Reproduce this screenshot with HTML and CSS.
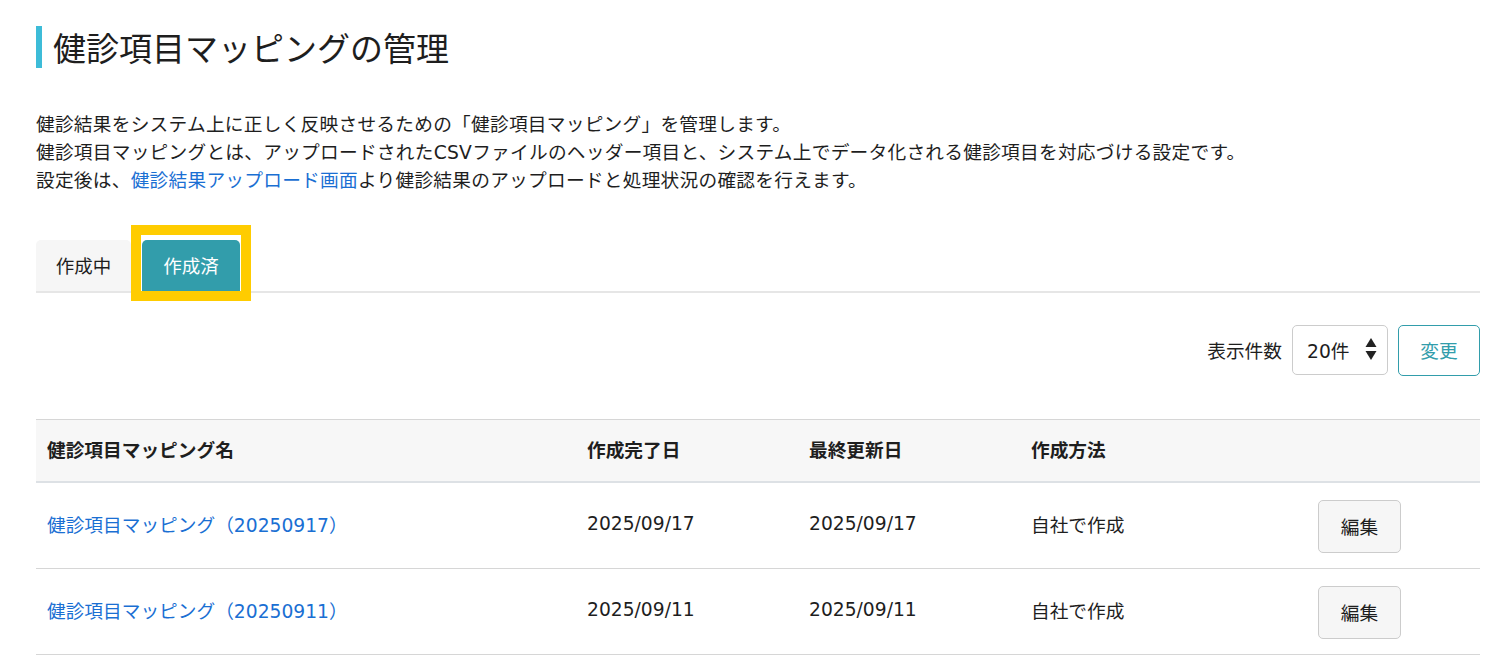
FILE: index.html
```html
<!DOCTYPE html>
<html lang="ja">
<head>
<meta charset="utf-8">
<title>健診項目マッピングの管理</title>
<link rel="stylesheet" href="styles.css">
</head>
<body>
<main class="page">
  <h1 class="title">健診項目マッピングの管理</h1>
  <div class="desc">
    <p>健診結果をシステム上に正しく反映させるための「健診項目マッピング」を管理します。</p>
    <p>健診項目マッピングとは、アップロードされたCSVファイルのヘッダー項目と、システム上でデータ化される健診項目を対応づける設定です。</p>
    <p>設定後は、<a href="#" class="link">健診結果アップロード画面</a>より健診結果のアップロードと処理状況の確認を行えます。</p>
  </div>
  <div class="tabs">
    <div class="tab">作成中</div>
    <div class="tab tab-active">作成済<span class="highlight"></span></div>
  </div>
  <div class="toolbar">
    <span class="toolbar-label">表示件数</span>
    <div class="select">
      <span>20件</span>
      <svg class="arrows" width="12" height="24" viewBox="0 0 12 24"><path d="M6 1 L11.5 10 H0.5 Z" fill="#222"/><path d="M6 23 L11.5 14 H0.5 Z" fill="#222"/></svg>
    </div>
    <button class="btn-change">変更</button>
  </div>
  <table class="table">
    <colgroup>
      <col class="c1"><col class="c2"><col class="c3"><col class="c4"><col class="c5">
    </colgroup>
    <thead>
      <tr><th>健診項目マッピング名</th><th>作成完了日</th><th>最終更新日</th><th>作成方法</th><th></th></tr>
    </thead>
    <tbody>
      <tr>
        <td><a href="#" class="link">健診項目マッピング（20250917）</a></td>
        <td>2025/09/17</td><td>2025/09/17</td><td>自社で作成</td>
        <td class="action"><button class="btn-edit">編集</button></td>
      </tr>
      <tr>
        <td><a href="#" class="link">健診項目マッピング（20250911）</a></td>
        <td>2025/09/11</td><td>2025/09/11</td><td>自社で作成</td>
        <td class="action"><button class="btn-edit">編集</button></td>
      </tr>
    </tbody>
  </table>
</main>
</body>
</html>
```

FILE: styles.css
```css
html, body {
  margin: 0;
  padding: 0;
  background: #fff;
}
body {
  font-family: "DejaVu Sans", "Noto Sans CJK JP", sans-serif;
  color: #1e1e1e;
  font-size: 18.7px;
}
.page {
  margin: 0 6px 0 36px;
  padding-top: 26px;
}
.title {
  margin: 0;
  font-size: 33px;
  font-weight: normal;
  line-height: 42px;
  border-left: 6px solid #3dbcd8;
  padding-left: 11px;
  font-family: "Noto Sans CJK JP", sans-serif;
}
.desc {
  margin-top: 43px;
  font-size: 18.7px;
  line-height: 28px;
  letter-spacing: 0.25px;
}
.desc p {
  margin: 0;
}
.link {
  color: #1a6fd3;
  text-decoration: none;
}
.tabs {
  margin-top: 45px;
  display: flex;
  gap: 11px;
  border-bottom: 2px solid #e6e6e6;
  height: 51px;
}
.tab {
  position: relative;
  width: 95px;
  height: 51px;
  display: flex;
  align-items: center;
  justify-content: center;
  background: #f6f6f6;
  border-radius: 5px 5px 0 0;
  font-size: 18.5px;
  box-sizing: border-box;
  padding-bottom: 2px;
}
.tab-active {
  width: 98px;
  background: #329dab;
  color: #fff;
}
.highlight {
  position: absolute;
  left: -11px;
  top: -15px;
  width: 100px;
  height: 56px;
  border: 10px solid #ffcc00;
  pointer-events: none;
}
.toolbar {
  margin-top: 32px;
  display: flex;
  justify-content: flex-end;
  align-items: center;
  height: 50px;
}
.toolbar-label {
  font-size: 18.7px;
  margin-right: 10px;
  padding-bottom: 2px;
}
.select {
  box-sizing: border-box;
  width: 96px;
  height: 50px;
  border: 1px solid #ccc;
  border-radius: 5px;
  display: flex;
  align-items: center;
  justify-content: space-between;
  padding: 0 10px 2px 14px;
  font-size: 18.7px;
}
.arrows {
  display: block;
}
.btn-change {
  box-sizing: border-box;
  margin-left: 10px;
  width: 82px;
  height: 51px;
  border: 1px solid #329dab;
  border-radius: 5px;
  background: #fff;
  color: #329dab;
  font-size: 18.7px;
  font-family: "Noto Sans CJK JP", sans-serif;
  padding-bottom: 3px;
}
.table {
  margin-top: 44px;
  width: 100%;
  border-collapse: collapse;
  table-layout: fixed;
}
.c1 { width: 540px; }
.c2 { width: 222px; }
.c3 { width: 222px; }
.c4 { width: 287px; }
.c5 { width: 173px; }
.table th {
  text-align: left;
  font-weight: bold;
  background: #f7f7f7;
  height: 57px;
  padding: 0 11px 4px;
  border-top: 1px solid #d6d6d6;
  border-bottom: 2px solid #dde1e5;
  font-size: 18.7px;
  font-family: "Noto Sans CJK JP", sans-serif;
}
.table td {
  height: 81px;
  padding: 0 11px 4px;
  border-bottom: 1px solid #d6d6d6;
  font-size: 18.7px;
}
.table td.action {
  padding: 1px 11px 0;
}
.btn-edit {
  display: block;
  box-sizing: border-box;
  width: 83px;
  height: 53px;
  border: 1px solid #ccc;
  border-radius: 5px;
  background: #f6f6f6;
  color: #1e1e1e;
  font-size: 18.7px;
  font-family: "Noto Sans CJK JP", sans-serif;
  padding-bottom: 3px;
}
```
